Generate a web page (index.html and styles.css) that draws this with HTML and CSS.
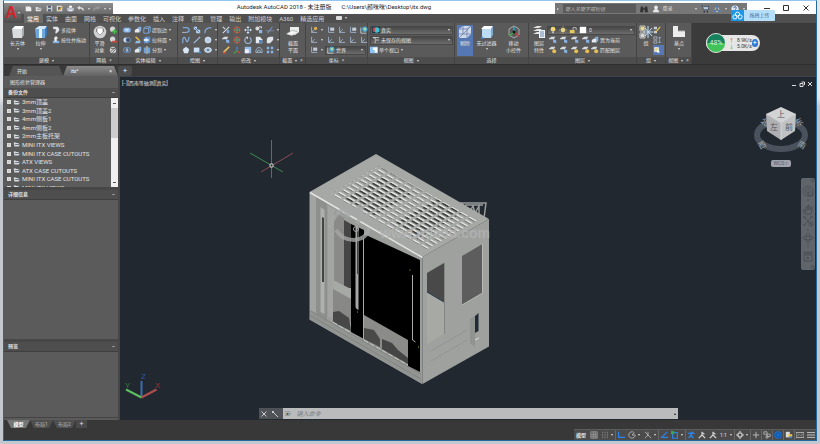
FILE: index.html
```html
<!DOCTYPE html>
<html lang="zh-CN">
<head>
    <meta charset="UTF-8">
    <meta name="viewport" content="width=device-width, initial-scale=1.0">
    <title>Autodesk AutoCAD 2018</title>
    <link rel="stylesheet" href="styles.css">
</head>
<body>
    <!-- icon sprite -->
    <svg class="sprite" aria-hidden="true">
        <symbol id="new" viewBox="0 0 10 10"><path d="M1 2h6l2 2v5H1z" fill="#eee"/></symbol>
        <symbol id="open" viewBox="0 0 10 10"><path d="M1 8V3h3l1 1h3v1l2 0-2 4H1z" fill="#ddd"/><path d="M3 6h6" stroke="#666"/></symbol>
        <symbol id="save" viewBox="0 0 10 10"><path d="M1 1h8v8H1z" fill="#c3ccd8"/><path d="M3 1h4v3H3zM3 6h4v3H3z" fill="#4a5668"/></symbol>
        <symbol id="saveas" viewBox="0 0 10 10"><path d="M1 1h8v8H1z" fill="#dcdcdc"/><path d="M3 3h4v4H3z" fill="#555"/><path d="M4 8l5-6" stroke="#e3a93a" stroke-width="2"/></symbol>
        <symbol id="print" viewBox="0 0 10 10"><path d="M3 1h4v3H3z" fill="#fff"/><path d="M0 4h10v4H0z" fill="#b9c2cc"/><path d="M2 7h6v2H2z" fill="#eef"/></symbol>
        <symbol id="undo" viewBox="0 0 10 10"><path d="M9 8c0-4-3-4-6-4" stroke="#ddd" stroke-width="2" fill="none"/><path d="M0 4l4-3v6z" fill="#ddd"/></symbol>
        <symbol id="redo" viewBox="0 0 10 10"><path d="M1 8c0-4 3-4 6-4" stroke="#999" stroke-width="2" fill="none"/><path d="M10 4L6 1v6z" fill="#999"/></symbol>
        <symbol id="box" viewBox="0 0 14 14"><path d="M1 4l3-3h9l-2 3z" fill="#fff"/><path d="M1 4h10v9H2z" fill="#d9dbdd"/><path d="M11 4l2-3v9l-2 3z" fill="#a8abae"/></symbol>
        <symbol id="extrude" viewBox="0 0 14 14"><path d="M1 4l4-3h8l-2 3z" fill="#cfe5fa"/><path d="M1 4h10v9H2z" fill="#6da7de"/><path d="M5 4h3v9H5z" fill="#e9f3fc"/><path d="M11 4l2-3v9l-2 3z" fill="#3c78b8"/></symbol>
        <symbol id="smooth" viewBox="0 0 14 14"><circle cx="7" cy="7" r="6.3" fill="#cfd0d1"/><path d="M3 4h8v3H3z" fill="#8b8d90"/><path d="M4 3h6v4L7 10 4 7z" fill="#fff" stroke="#777" stroke-width=".6"/></symbol>
        <symbol id="plane" viewBox="0 0 14 14"><path d="M4 2h9v5l-4 3H4z" fill="#eceded"/><path d="M0 9l6-4 6 1-6 5z" fill="#b9bcbe"/><path d="M1 9l5-3 5 1-5 3z" fill="#f8f8f8"/></symbol>
        <symbol id="cull" viewBox="0 0 14 14"><path d="M1 4l4-3h8v8l-4 4H1z" fill="#cdd8ea"/><path d="M1 4h8v9M9 4l4-3M5 1v8H1M5 9h8M1 13L13 1" stroke="#6d82aa" stroke-width=".8" fill="none"/></symbol>
        <symbol id="filter" viewBox="0 0 14 14"><path d="M1 4l3-3h9l-2 3z" fill="#fff"/><path d="M2 4h9v9H2z" fill="#bcdcf4"/><path d="M11 4l2-3v9l-2 3z" fill="#7ca9d0"/><circle cx="2" cy="13" r="1.2" fill="#3d82d0"/></symbol>
        <symbol id="gizmo" viewBox="0 0 14 14"><path d="M7 1l5 3v6l-5 3-5-3V4z" stroke="#a7abaf" fill="none"/><path d="M7 7V2" stroke="#29a7c4" stroke-width="1.6"/><path d="M7 7l-5 4" stroke="#3fae49" stroke-width="1.6"/><path d="M7 7l5 4" stroke="#c8413b" stroke-width="1.6"/><circle cx="7" cy="7" r="1.5" fill="#111"/></symbol>
        <symbol id="layerprop" viewBox="0 0 14 14"><path d="M1 3l4-2h5L7 3zM1 6l4-2h5L7 6zM1 9l4-2h5L7 9z" fill="#e5e5e5"/><path d="M7 5h6v8H7z" fill="#eef3f8"/><path d="M8 7h4M8 9h4M8 11h4" stroke="#6787ab"/></symbol>
        <symbol id="group" viewBox="0 0 14 14"><path d="M1 1h5v5H1zM1 8h5v5H1z" fill="none" stroke="#ccc"/><circle cx="3.5" cy="3.5" r="2" fill="#e8d98a"/><circle cx="3.5" cy="10.5" r="2" fill="#d7d7d7"/><path d="M9 1v12M4 7h10M6 3l7 8M13 3l-7 8" stroke="#bfe0fb"/></symbol>
        <symbol id="base" viewBox="0 0 14 14"><path d="M1 1h5v5h7v6H1z" fill="#ececec"/><path d="M6 6h7" stroke="#aaa"/></symbol>
        <symbol id="polysolid" viewBox="0 0 10 10"><path d="M1 1h6l2 2v3L6 9H4l1-5H2z" fill="#dfe3e8"/></symbol>
        <symbol id="presspull" viewBox="0 0 10 10"><path d="M1 6h8v3H1z" fill="#7fb2e4"/><path d="M5 0l3 3H6v4H3V3H2z" fill="#eee"/></symbol>
        <symbol id="meshadd" viewBox="0 0 10 10"><circle cx="4.5" cy="4" r="3.3" fill="#d5d5d5"/><path d="M7 4v6M4 7h6" stroke="#45b649" stroke-width="2"/></symbol>
        <symbol id="meshdel" viewBox="0 0 10 10"><circle cx="4.5" cy="4" r="3.3" fill="#d5d5d5"/><path d="M4 7h6" stroke="#d8493d" stroke-width="2"/></symbol>
        <symbol id="meshref" viewBox="0 0 10 10"><circle cx="5" cy="5" r="4" fill="#d5d5d5"/><path d="M2 7l7-6M4 9l5-6M2 3h6" stroke="#555"/></symbol>
        <symbol id="union" viewBox="0 0 10 10"><circle cx="3.3" cy="5" r="3.2" fill="#7fb0e6"/><circle cx="6.7" cy="5" r="3.2" fill="#7fb0e6"/><path d="M3 4h4M3 6h4" stroke="#fff"/></symbol>
        <symbol id="subtract" viewBox="0 0 10 10"><circle cx="3.5" cy="5" r="3" fill="#cfe2f6"/><circle cx="6.5" cy="5" r="3" fill="#4b4f55" stroke="#6f9fdb"/></symbol>
        <symbol id="intersect" viewBox="0 0 10 10"><circle cx="3.5" cy="5" r="3" fill="none" stroke="#6f9fdb"/><circle cx="6.5" cy="5" r="3" fill="none" stroke="#6f9fdb"/><path d="M5 3q2 2 0 4q-2-2 0-4" fill="#dfeaf8"/></symbol>
        <symbol id="solid" viewBox="0 0 10 10"><path d="M1 5l3-2h3v5H1z" fill="#e6e8ea"/><path d="M4 3l2-2h3v5L7 8V3z" fill="#83b2e4"/></symbol>
        <symbol id="edge" viewBox="0 0 10 10"><path d="M1 3h6v6H1zM1 3l2-2h6v6L7 9M7 3l2-2" stroke="#7fb4ee" fill="none"/></symbol>
        <symbol id="face" viewBox="0 0 10 10"><path d="M1 3l2-2h6v6L7 9H1z" fill="#5c91cb"/><path d="M1 4h6v2H1z" fill="#fff"/><path d="M4 2v6" stroke="#e6f0fa"/></symbol>
        <symbol id="split" viewBox="0 0 10 10"><path d="M1 2h3v7H1zM6 2h3v7H6z" fill="#6ba3de"/><path d="M5 0v10" stroke="#fff"/></symbol>
        <symbol id="brush" viewBox="0 0 10 10"><path d="M2 1l5 5" stroke="#e8b64c" stroke-width="2"/><path d="M1 9l2-3 6 1-2 2z" fill="#8fbdec"/></symbol>
        <symbol id="pline" viewBox="0 0 10 10"><path d="M1 2h4q4 0 4 3t-4 3" stroke="#7ea9dc" stroke-width="1.5" fill="none"/><path d="M0 8h5" stroke="#ccc"/></symbol>
        <symbol id="spline" viewBox="0 0 10 10"><path d="M1 9V4q2-5 4 1t4-4" stroke="#8eb9ea" stroke-width="1.3" fill="none"/></symbol>
        <symbol id="line" viewBox="0 0 10 10"><path d="M1 9l8-8" stroke="#a9c8ec" stroke-width="1.3"/></symbol>
        <symbol id="arc" viewBox="0 0 10 10"><path d="M1 9q0-7 8-7" stroke="#83aee2" stroke-width="1.5" fill="none"/></symbol>
        <symbol id="hatch" viewBox="0 0 10 10"><path d="M1 1h4v3l4 1v4H4V5L1 4z" fill="#bcd6f2"/><path d="M2 2l6 6" stroke="#386cad"/></symbol>
        <symbol id="polygon" viewBox="0 0 10 10"><path d="M5 1l4 3-1.5 5h-5L1 4z" fill="#dae6f4"/></symbol>
        <symbol id="rect" viewBox="0 0 10 10"><path d="M1 2h7v6H1z" fill="#cbdff5"/><path d="M7 7h3v2H7z" fill="#4e8cd2"/></symbol>
        <symbol id="circle" viewBox="0 0 10 10"><circle cx="5" cy="5" r="3.7" fill="#b8d0ea" stroke="#e4edf7"/></symbol>
        <symbol id="ellipse" viewBox="0 0 10 10"><ellipse cx="5" cy="5" rx="4.3" ry="3" fill="#a8c3e2" stroke="#e4edf7"/><circle cx="5" cy="5" r="1" fill="#333"/></symbol>
        <symbol id="trim" viewBox="0 0 10 10"><path d="M1 9l8-8M1 1l3 3" stroke="#d5dde6" stroke-width="1.3"/><path d="M6 5h3v4H6z" fill="#79a8df"/></symbol>
        <symbol id="rot3" viewBox="0 0 10 10"><circle cx="5" cy="5" r="3.7" stroke="#d0503f" stroke-width="1.3" fill="none"/><path d="M5 1v8M1 5h8" stroke="#5fae7d"/></symbol>
        <symbol id="move" viewBox="0 0 10 10"><path d="M5 0l2 2.500H3zM5 10l2-2.500H3zM0 5l2.500-2v4zM10 5L7.500 3v4z" fill="#dbe6f2"/><path d="M5 2v6M2 5h6" stroke="#aac5e4"/></symbol>
        <symbol id="copy" viewBox="0 0 10 10"><circle cx="3" cy="3" r="2.5" fill="#d9d9d9"/><path d="M5 5h4v4H5z" fill="#8cb8ea"/><path d="M5 1h3v2" stroke="#fff" fill="none"/></symbol>
        <symbol id="extend" viewBox="0 0 10 10"><path d="M0 6h10" stroke="#8195ae"/><path d="M2 9l6-8" stroke="#87b3e6"/></symbol>
        <symbol id="scalei" viewBox="0 0 10 10"><path d="M1 1h8v8H1z" fill="#93bce9"/><path d="M1 4h5v5H1z" fill="#eef"/></symbol>
        <symbol id="rotate" viewBox="0 0 10 10"><path d="M7 2a4 4 0 1 1-4 0" stroke="#9db8d6" stroke-width="1.4" fill="none"/><path d="M2 1h3v3z" fill="#dce7f3"/></symbol>
        <symbol id="axes" viewBox="0 0 10 10"><path d="M5 6V1" stroke="#4587d8" stroke-width="1.5"/><path d="M5 6L1 9" stroke="#43a84d" stroke-width="1.5"/><path d="M5 6l4 3" stroke="#c94942" stroke-width="1.5"/></symbol>
        <symbol id="mirror" viewBox="0 0 10 10"><path d="M1 1h5l3 3v5H1z" fill="#e7ecf2"/><path d="M5 5h4v4H5z" fill="#4f8ace"/></symbol>
        <symbol id="fillet" viewBox="0 0 10 10"><path d="M1 9V5q0-4 5-4h3v4L5 9z" fill="#dfe5ea"/></symbol>
        <symbol id="pencil" viewBox="0 0 10 10"><path d="M2 8l7-7" stroke="#f0c05c" stroke-width="2"/><path d="M1 9l4-1" stroke="#d8493d" stroke-width="2"/></symbol>
        <symbol id="offset" viewBox="0 0 10 10"><path d="M1 8q0-6 4-6t4 6zM3 8q0-3 2-3t2 3" stroke="#a8c2df" fill="none"/></symbol>
        <symbol id="array" viewBox="0 0 10 10"><path d="M1 1h3v3H1zM6 1h3v3H6zM1 6h3v3H1zM6 6h3v3H6z" fill="#86b6ec"/></symbol>
        <symbol id="ucs" viewBox="0 0 10 10"><path d="M2 1v7h7M2 8l4-4" stroke="#a6c0dc" fill="none"/></symbol>
        <symbol id="ucsdot" viewBox="0 0 10 10"><path d="M2 1v7h7M2 8l4-4" stroke="#a6c0dc" fill="none"/><circle cx="7" cy="3" r="2" fill="#e6ad4a"/></symbol>
        <symbol id="ucsbox" viewBox="0 0 10 10"><path d="M2 1v7h7" stroke="#a6c0dc" fill="none"/><path d="M4 2h5v4H4z" fill="#c3ccd6"/></symbol>
        <symbol id="globe" viewBox="0 0 10 10"><circle cx="6" cy="4" r="3.5" fill="#4ea0c6"/><path d="M4 3l3-1 1 3-2 1z" fill="#aee0a8"/><path d="M1 2v7h7" stroke="#d0dae4" fill="none"/></symbol>
        <symbol id="style" viewBox="0 0 10 10"><path d="M0 1h10v8H0z" fill="#17324a"/><circle cx="6" cy="5" r="3.5" fill="#43c1cf"/><path d="M1 2h3v5H1z" fill="#c94848"/></symbol>
        <symbol id="saved" viewBox="0 0 10 10"><path d="M1 2h3v7M1 2h8M5 5h4" stroke="#ddd" fill="none"/></symbol>
        <symbol id="viewport" viewBox="0 0 10 10"><path d="M0 1h10v8H0z" fill="#8fc4f2"/><path d="M4 2h5v6H6V5H4z" fill="#fff"/></symbol>
        <symbol id="bulb" viewBox="0 0 10 10"><circle cx="5" cy="4" r="3" fill="#f2d777"/><path d="M4 7h2v2H4z" fill="#ccc"/></symbol>
        <symbol id="sun" viewBox="0 0 10 10"><circle cx="5" cy="5" r="2.5" fill="#f7e8a4"/><path d="M5 0v10M0 5h10M2 2l6 6M8 2L2 8" stroke="#e8d27e" stroke-width=".7"/></symbol>
        <symbol id="lock" viewBox="0 0 10 10"><path d="M1 5h6v4H1z" fill="#e4c95f"/><path d="M5 5V2h4v3" stroke="#ccc" fill="none"/></symbol>
        <symbol id="swatch" viewBox="0 0 10 10"><path d="M1 1h8v8H1z" fill="#fff"/></symbol>
        <symbol id="layer" viewBox="0 0 10 10"><path d="M0 3l3-2h5L6 4H0z" fill="#d7dade"/><path d="M5 4l4 1v4L5 8z" fill="#86aede"/></symbol>
        <symbol id="layery" viewBox="0 0 10 10"><path d="M0 3l3-2h5L6 4H0z" fill="#d7dade"/><circle cx="6.5" cy="6.5" r="2.5" fill="#e8bd4e"/></symbol>
        <symbol id="grp1" viewBox="0 0 10 10"><path d="M1 1h4v3H1zM1 6h4v3H1z" fill="#c9ced4"/><path d="M4 7l5-6" stroke="#e7c34e" stroke-width="1.5"/></symbol>
        <symbol id="grp2" viewBox="0 0 10 10"><path d="M1 1h4v3H1zM1 6h4v3H1z" fill="none" stroke="#aeb7c1"/><path d="M7 2h3M7 8h3M8 1v8" stroke="#8fb5e2"/></symbol>
        <symbol id="grp3" viewBox="0 0 10 10"><path d="M2 2h5v5H2z" fill="#e2d77e" stroke="#eee"/><path d="M5 4l4 4H5z" fill="#fff"/></symbol>
        <symbol id="folder" viewBox="0 0 10 10"><path d="M1 2h3l1 1h3v2h2L8 8H2z" fill="#d5dbe1"/><path d="M3 5h6" stroke="#454b52"/></symbol>
        <symbol id="binoc" viewBox="0 0 10 10"><path d="M1 2h3v7H0zM6 2h3l1 7H6zM4 4h2v2H4z" fill="#333"/></symbol>
        <symbol id="user" viewBox="0 0 10 10"><circle cx="5" cy="3" r="2.3" fill="#e8e8e8"/><path d="M1 9q1-4 4-4t4 4z" fill="#e8e8e8"/></symbol>
        <symbol id="cart" viewBox="0 0 10 10"><path d="M0 1h2l1 5h6l1-4H3" fill="#bdc9d8" stroke="#34465e"/><circle cx="4" cy="8.5" r="1" fill="#223"/><circle cx="8" cy="8.5" r="1" fill="#223"/></symbol>
        <symbol id="share" viewBox="0 0 10 10"><path d="M5 1l4 7H1z" fill="none" stroke="#c5d6ea"/><circle cx="5" cy="2" r="1.6" fill="#4d79b0"/><circle cx="2" cy="7.5" r="1.6" fill="#4d79b0"/><circle cx="8" cy="7.5" r="1.6" fill="#4d79b0"/></symbol>
        <symbol id="help" viewBox="0 0 10 10"><circle cx="5" cy="5" r="4.5" fill="#e9eff7"/><path d="M3.500 4q0-2 1.500-2t1.500 1.500T5 6M5 7v1" stroke="#2c5fa8" stroke-width="1.2" fill="none"/></symbol>
        <symbol id="gridi" viewBox="0 0 10 10"><path d="M1 1h8v8H1zM1 4h8M1 6.500h8M4 1v8M6.500 1v8" stroke="#a2a2a2" fill="none"/></symbol>
        <symbol id="snap" viewBox="0 0 10 10"><path d="M2 1v8M5 1v8M8 1v8" stroke="#8d8d8d" stroke-dasharray="2 1"/></symbol>
        <symbol id="ortho" viewBox="0 0 10 10"><path d="M2 1v7h8" stroke="#2c84ea" stroke-width="1.5" fill="none"/></symbol>
        <symbol id="polar" viewBox="0 0 10 10"><path d="M9 5a4 4 0 1 1-2-3.500M5 5h4M5 5l3-3" stroke="#c0c0c0" fill="none"/></symbol>
        <symbol id="iso" viewBox="0 0 10 10"><path d="M1 1l8 8M5 1v5M5 5L1 9" stroke="#bbb" fill="none"/></symbol>
        <symbol id="track" viewBox="0 0 10 10"><path d="M9 1L2 8h8" stroke="#2c84ea" stroke-width="1.4" fill="none"/></symbol>
        <symbol id="osnap" viewBox="0 0 10 10"><path d="M2 2h6v7H2z" stroke="#2c84ea" stroke-width="1.4" fill="none"/><path d="M0 0h4v4H0z" fill="#35a84a"/></symbol>
        <symbol id="annob" viewBox="0 0 10 10"><path d="M5 1v4L2 9M5 5l3 4M1 3h8M7 1l2 3" stroke="#2c84ea" stroke-width="1.7" fill="none"/></symbol>
        <symbol id="anno" viewBox="0 0 10 10"><path d="M5 1v4L1 9M5 5l4 4M5 2l3 2" stroke="#d5d5d5" stroke-width="1.5" fill="none"/></symbol>
        <symbol id="gear" viewBox="0 0 10 10"><circle cx="5" cy="5" r="2.6" fill="none" stroke="#ccc" stroke-width="1.6"/><path d="M5 0v2M5 8v2M0 5h2M8 5h2" stroke="#ccc" stroke-width="1.5"/></symbol>
        <symbol id="plusi" viewBox="0 0 10 10"><path d="M5 1v8M1 5h8" stroke="#ccc"/></symbol>
        <symbol id="isolate" viewBox="0 0 10 10"><path d="M1 1h4v3H1zM5 4h4v3H5z" fill="none" stroke="#bbb"/><circle cx="5" cy="7.5" r="1.5" fill="none" stroke="#bbb"/></symbol>
        <symbol id="perf" viewBox="0 0 10 10"><circle cx="5" cy="5" r="4.7" fill="#1a6fd0"/><circle cx="5" cy="5" r="2.7" stroke="#0d468c" fill="none"/></symbol>
        <symbol id="hw" viewBox="0 0 10 10"><path d="M1 1h5v7H1z" fill="#dadada"/><path d="M4 4h5v3H4z" fill="#e8c64a"/><path d="M5 7h4v2H5z" fill="#3c83d8"/></symbol>
        <symbol id="full" viewBox="0 0 10 10"><path d="M0 2h10v6H0z" fill="none" stroke="#ccc"/><path d="M2 6l2-2M8 4L6 6" stroke="#ccc"/></symbol>
        <symbol id="menu" viewBox="0 0 10 10"><path d="M0 2h10M0 5h10M0 8h10" stroke="#ddd"/></symbol>
    </svg>

    <div class="app">
        <header class="header">
            <button class="app-btn"><b>A</b><i class="arr"></i></button>
            <div class="titlebar">
                <div class="qat">
                    <button><svg><use href="#new"/></svg></button>
                    <button><svg><use href="#open"/></svg></button>
                    <button><svg><use href="#save"/></svg></button>
                    <button><svg><use href="#saveas"/></svg></button>
                    <button><svg><use href="#print"/></svg></button>
                    <button><svg><use href="#undo"/></svg></button>
                    <i class="arr"></i>
                    <button><svg><use href="#redo"/></svg></button>
                    <i class="arr"></i>
                    <i class="arr"></i>
                </div>
                <h1 class="title"><span>Autodesk AutoCAD 2018 - 未注册版</span><span>C:\Users\颜咪咪\Desktop\itx.dwg</span></h1>
                <div class="infocenter">
                    <i class="arr side"></i>
                    <input class="search" type="text" placeholder="键入关键字或短语" aria-label="搜索">
                    <button><svg><use href="#binoc"/></svg></button>
                    <button class="login"><svg><use href="#user"/></svg>登录</button>
                    <i class="arr"></i>
                    <button><svg><use href="#cart"/></svg></button>
                    <button><svg><use href="#share"/></svg></button>
                    <i class="arr"></i>
                    <button><svg><use href="#help"/></svg></button>
                    <i class="arr"></i>
                </div>
                <div class="win-btns">
                    <button aria-label="最小化"><svg viewBox="0 0 8 8"><path d="M1 4.500h6"/></svg></button>
                    <button aria-label="最大化"><svg viewBox="0 0 8 8"><path d="M1.500 1.500h5v5h-5z"/></svg></button>
                    <button aria-label="关闭"><svg viewBox="0 0 8 8"><path d="M1.500 1.500l5 5M6.500 1.500l-5 5"/></svg></button>
                </div>
            </div>
            <nav class="tabs">
                <a href="#" class="active">常用</a><a href="#">实体</a><a href="#">曲面</a><a href="#">网格</a><a href="#">可视化</a><a href="#">参数化</a><a href="#">插入</a><a href="#">注释</a><a href="#">视图</a><a href="#">管理</a><a href="#">输出</a><a href="#">附加模块</a><a href="#">A360</a><a href="#">精选应用</a>
                <button class="pill"></button><i class="arr"></i>
            </nav>
            <button class="upload"><svg viewBox="0 0 14 11"><circle cx="7" cy="4" r="2.2"/><circle cx="4.2" cy="7" r="2.2"/><circle cx="9.8" cy="7" r="2.2"/></svg><span>拖拽上传</span></button>
        </header>

        <div class="ribbon">
            <section class="panel p-model">
                <div class="panel-body">
                    <button class="big"><svg><use href="#box"/></svg>长方体<i class="arr"></i></button>
                    <button class="big"><svg><use href="#extrude"/></svg>拉伸<i class="arr"></i></button>
                    <div class="stack">
                        <button class="tool"><svg><use href="#polysolid"/></svg>多段体</button>
                        <button class="tool"><svg><use href="#presspull"/></svg>按住并拖动</button>
                    </div>
                </div>
                <h2>建模<i class="arr"></i></h2>
            </section>
            <section class="panel p-mesh">
                <div class="panel-body">
                    <button class="big"><svg><use href="#smooth"/></svg>平滑<br>对象</button>
                    <div class="stack">
                        <button class="tool"><svg><use href="#meshadd"/></svg></button>
                        <button class="tool"><svg><use href="#meshdel"/></svg></button>
                        <button class="tool"><svg><use href="#meshref"/></svg></button>
                    </div>
                </div>
                <h2>网格<i class="launch">»</i></h2>
            </section>
            <section class="panel p-solid">
                <div class="panel-body stack">
                    <div class="row"><button class="tool"><svg><use href="#union"/></svg></button><button class="tool"><svg><use href="#solid"/></svg></button><button class="tool"><svg><use href="#edge"/></svg>提取边</button><i class="arr"></i></div>
                    <div class="row"><button class="tool"><svg><use href="#subtract"/></svg></button><button class="tool"><svg><use href="#brush"/></svg></button><button class="tool"><svg><use href="#face"/></svg>拉伸面</button><i class="arr"></i></div>
                    <div class="row"><button class="tool"><svg><use href="#intersect"/></svg></button><button class="tool"><svg><use href="#solid"/></svg></button><button class="tool"><svg><use href="#split"/></svg>分割</button><i class="arr"></i></div>
                </div>
                <h2>实体编辑<i class="arr"></i></h2>
            </section>
            <section class="panel p-draw">
                <div class="panel-body stack">
                    <div class="row"><button class="tool"><svg><use href="#pline"/></svg></button><button class="tool"><svg><use href="#hatch"/></svg></button><button class="tool"><svg><use href="#arc"/></svg></button><i class="arr"></i></div>
                    <div class="row"><button class="tool"><svg><use href="#spline"/></svg></button><button class="tool"><svg><use href="#line"/></svg></button><button class="tool"><svg><use href="#circle"/></svg></button><i class="arr"></i></div>
                    <div class="row"><button class="tool"><svg><use href="#polygon"/></svg></button><button class="tool"><svg><use href="#rect"/></svg></button><button class="tool"><svg><use href="#ellipse"/></svg></button><i class="arr"></i></div>
                </div>
                <h2>绘图<i class="arr"></i></h2>
            </section>
            <section class="panel p-modify">
                <div class="panel-body stack">
                    <div class="row"><button class="tool"><svg><use href="#trim"/></svg></button><button class="tool"><svg><use href="#rot3"/></svg></button><button class="tool"><svg><use href="#move"/></svg></button><button class="tool"><svg><use href="#copy"/></svg></button><button class="tool"><svg><use href="#extend"/></svg></button><i class="arr"></i></div>
                    <div class="row"><button class="tool"><svg><use href="#layer"/></svg></button><button class="tool"><svg><use href="#rot3"/></svg></button><button class="tool"><svg><use href="#rotate"/></svg></button><button class="tool"><svg><use href="#mirror"/></svg></button><button class="tool"><svg><use href="#fillet"/></svg></button><i class="arr"></i></div>
                    <div class="row"><button class="tool"><svg><use href="#pencil"/></svg></button><button class="tool"><svg><use href="#axes"/></svg></button><button class="tool"><svg><use href="#scalei"/></svg></button><button class="tool"><svg><use href="#offset"/></svg></button><button class="tool"><svg><use href="#array"/></svg></button><i class="arr"></i></div>
                </div>
                <h2>修改<i class="arr"></i></h2>
            </section>
            <section class="panel p-section">
                <div class="panel-body">
                    <button class="big"><svg><use href="#plane"/></svg>截面<br>平面</button>
                </div>
                <h2>截面<i class="arr"></i><i class="launch">»</i></h2>
            </section>
            <section class="panel p-coord">
                <div class="panel-body stack">
                    <div class="row"><button class="tool"><svg><use href="#ucsdot"/></svg></button><i class="arr"></i><button class="tool"><svg><use href="#ucsbox"/></svg></button><button class="tool"><svg><use href="#ucs"/></svg></button><button class="tool"><svg><use href="#ucsbox"/></svg></button><button class="tool"><svg><use href="#globe"/></svg></button></div>
                    <div class="row"><button class="tool"><svg><use href="#ucs"/></svg></button><i class="arr"></i><button class="tool"><svg><use href="#ucs"/></svg></button><button class="tool"><svg><use href="#ucs"/></svg></button><button class="tool"><svg><use href="#ucs"/></svg></button><button class="tool"><svg><use href="#ucs"/></svg></button></div>
                    <div class="row"><button class="tool"><svg><use href="#ucsbox"/></svg></button><i class="arr"></i><div class="combo"><svg><use href="#globe"/></svg><select aria-label="坐标系"><option>世界</option></select><i class="arr"></i></div></div>
                </div>
                <h2>坐标<i class="launch">»</i></h2>
            </section>
            <section class="panel p-view">
                <div class="panel-body stack">
                    <div class="row"><div class="combo"><svg><use href="#style"/></svg><select aria-label="视觉样式"><option>真实</option></select><i class="arr"></i></div></div>
                    <div class="row"><div class="combo"><svg><use href="#saved"/></svg><select aria-label="视图"><option>未保存的视图</option></select><i class="arr"></i></div></div>
                    <div class="row"><button class="tool"><svg><use href="#viewport"/></svg>单个视口</button><i class="arr"></i></div>
                </div>
                <h2>视图<i class="arr"></i></h2>
            </section>
            <section class="panel p-select">
                <div class="panel-body">
                    <button class="big on"><svg><use href="#cull"/></svg>剔除</button>
                    <button class="big"><svg><use href="#filter"/></svg>无过滤器<i class="arr"></i></button>
                    <button class="big"><svg><use href="#gizmo"/></svg>移动<br>小控件</button>
                </div>
                <h2>选择</h2>
            </section>
            <section class="panel p-layer">
                <div class="panel-body">
                    <button class="big"><svg><use href="#layerprop"/></svg>图层<br>特性</button>
                    <div class="stack">
                        <div class="row"><div class="combo"><svg><use href="#bulb"/></svg><svg><use href="#sun"/></svg><svg><use href="#lock"/></svg><svg><use href="#swatch"/></svg><select aria-label="图层"><option>0</option></select><i class="arr"></i></div></div>
                        <div class="row"><button class="tool"><svg><use href="#layer"/></svg></button><button class="tool"><svg><use href="#layer"/></svg></button><button class="tool"><svg><use href="#layer"/></svg></button><button class="tool"><svg><use href="#layer"/></svg></button><button class="tool"><svg><use href="#solid"/></svg>置为当前</button></div>
                        <div class="row"><button class="tool"><svg><use href="#layery"/></svg></button><button class="tool"><svg><use href="#layer"/></svg></button><button class="tool"><svg><use href="#layery"/></svg></button><button class="tool"><svg><use href="#layery"/></svg></button><button class="tool"><svg><use href="#layery"/></svg>匹配图层</button></div>
                    </div>
                </div>
                <h2>图层<i class="arr"></i></h2>
            </section>
            <section class="panel p-group">
                <div class="panel-body">
                    <button class="big"><svg><use href="#group"/></svg>组</button>
                    <div class="stack">
                        <button class="tool"><svg><use href="#grp1"/></svg></button>
                        <button class="tool"><svg><use href="#grp2"/></svg></button>
                        <button class="tool on"><svg><use href="#grp3"/></svg></button>
                    </div>
                </div>
                <h2>组<i class="arr"></i></h2>
            </section>
            <section class="panel p-base">
                <div class="panel-body">
                    <button class="big"><svg><use href="#base"/></svg>基点<i class="arr"></i></button>
                </div>
                <h2>视图<i class="arr"></i><i class="launch">»</i></h2>
            </section>
            <div class="speed">
                <div class="ball">48%</div>
                <div class="rates"><span><i class="up">↑</i>8.9K/s</span><span><i class="down">↓</i>5.0K/s</span></div>
                <button class="boost">+</button>
            </div>
        </div>

        <nav class="file-tabs">
            <a href="#">开始</a>
            <a href="#" class="active">itx*<i>×</i></a>
            <button>+</button>
        </nav>

        <main class="main">
            <aside class="palette">
                <h2>图形修复管理器</h2>
                <section class="backup">
                    <h3>备份文件<span>−</span></h3>
                    <div class="list">
                        <ul>
                            <li><i></i><svg><use href="#folder"/></svg>3mm顶盖</li>
                            <li><i></i><svg><use href="#folder"/></svg>3mm顶盖2</li>
                            <li><i></i><svg><use href="#folder"/></svg>4mm侧板1</li>
                            <li><i></i><svg><use href="#folder"/></svg>4mm侧板2</li>
                            <li><i></i><svg><use href="#folder"/></svg>2mm主板托架</li>
                            <li><i></i><svg><use href="#folder"/></svg>MINI ITX VIEWS</li>
                            <li><i></i><svg><use href="#folder"/></svg>MINI ITX CASE CUTOUTS</li>
                            <li><i></i><svg><use href="#folder"/></svg>ATX VIEWS</li>
                            <li><i></i><svg><use href="#folder"/></svg>ATX CASE CUTOUTS</li>
                            <li><i></i><svg><use href="#folder"/></svg>MINI ITX CASE CUTOUTS</li>
                            <li><i></i><svg><use href="#folder"/></svg>MINI ITX VIEWS</li>
                        </ul>
                        <div class="scroll"><b></b><span></span><b class="dn"></b></div>
                    </div>
                </section>
                <section class="details"><h3>详细信息<span>−</span></h3></section>
                <section class="preview"><h3>预览<span>−</span></h3></section>
            </aside>

            <div class="canvas">
                <div class="vp-label">[−][西南等轴测][真实]</div>
                <div class="vp-btns">
                    <button aria-label="最小化"><svg viewBox="0 0 6 6"><path d="M1 4.500h4"/></svg></button>
                    <button aria-label="还原"><svg viewBox="0 0 6 6"><path d="M1 2.500h3v3H1zM2.500 1h3v3"/></svg></button>
                    <button aria-label="关闭"><svg viewBox="0 0 6 6"><path d="M1 1l4 4M5 1L1 5"/></svg></button>
                </div>

                <svg class="cursor" viewBox="248 138 48 42">
                    <path d="M271.500 140v38" stroke="#5d5fae"/>
                    <path d="M250 153l33 19" stroke="#3f8a51"/>
                    <path d="M293 153l-32 19" stroke="#8d4a52"/>
                    <path d="M270 164h3v3h-3z" fill="#222831" stroke="#ccc"/>
                </svg>

                <!-- ITX case, south-west isometric -->
                <svg class="model" viewBox="300 150 200 240">
                    <defs>
                        <pattern id="vents" width="5" height="10" patternUnits="userSpaceOnUse" patternTransform="matrix(.87 -.5 .87 .5 334 195)">
                            <rect width="1.5" height="7.5" fill="#e6e7e5"/>
                            <rect x="3.6" y=".5" width="1.4" height="7" fill="#7b7d7c"/>
                        </pattern>
                        <pattern id="deep" width="5" height="10" patternUnits="userSpaceOnUse" patternTransform="matrix(.87 -.5 .87 .5 334 195)">
                            <rect width="1.5" height="7.5" fill="#e6e7e5"/>
                            <rect x="3" y=".5" width="2" height="7" fill="#3f4140"/>
                        </pattern>
                    </defs>
                    <path d="M461 203h25l-2 15-8-2zM465 205h18M469 213l4-7 2 7 4-7v9" fill="none" stroke="#9a9c9b" stroke-width="1.5"/>
                    <path d="M309.500 192L422.500 257v127L309.500 319.500z" fill="#9b9d9b"/>
                    <path d="M310 193l17 10v118l-17-10z" fill="#8d8f8d"/>
                    <path d="M310 193l6 4v117l-6-4z" fill="#a2a4a2"/>
                    <path d="M320.500 207l4 3v104l-4-2z" fill="#aeb0ae"/>
                    <path d="M322 217l2 1v64h-2z" fill="#444"/>
                    <path d="M328 206l7 4v110l-7-4z" fill="#a3a5a3"/>
                    <path d="M334 212l10 6v72l-10-7z" fill="#8a8a88"/>
                    <path d="M344 220l7 4v64h-7z" fill="#454545"/>
                    <path d="M333 280l18 9v10l-18-9z" fill="#a7a9a5"/>
                    <path d="M333 289l18 10v24l-18-11z" fill="#888886"/>
                    <path d="M333 312l6-1 10 7 2 13-18-9z" fill="#474747"/>
                    <path d="M364 315l44 25v25l-44-25z" fill="#8b8b89"/>
                    <path d="M364 328l10 2 6 9v8l-16-8z" fill="#4a4a48"/>
                    <path d="M382 339l10 4 6 7 10 8v6l-26-15z" fill="#454545"/>
                    <path d="M351 224l13 6v109l-13-7z" fill="#000"/>
                    <path d="M366 235l54 25v112l-12-6v-26l-44-25v-79z" fill="#000"/>
                    <path d="M363.500 238v101" stroke="#aaa"/>
                    <path d="M355.500 225v82q1 3 3 3V228z" fill="#a6a8a6"/>
                    <path d="M357.500 229v45" stroke="#444"/>
                    <path d="M412.500 275v65l3 2" fill="none" stroke="#a9aba9"/>
                    <path d="M311 311l109 62 2 11-112.500-64.500z" fill="#929492"/>
                    <path d="M311 311l110 63M311 316l110 63" stroke="#7e807e" stroke-width=".8" fill="none"/>
                    <path d="M333 322l18 11M364 340l44 25" stroke="#c9cbc9" stroke-dasharray="5 2"/>
                    <path d="M409.500 270h1M357 312h1M418 347h1" stroke="#a8a23a"/>
                    <path d="M422.500 257L489 219v127.500L422.500 384z" fill="#9fa19f"/>
                    <path d="M427 273l17-10v39l-17-10z" fill="#494949"/>
                    <path d="M427 292l17 10v32l-17 10z" fill="#a7a9a5"/>
                    <path d="M427 292l17 10" stroke="#26384b"/>
                    <path d="M444.500 263v71" stroke="#838583"/>
                    <path d="M462 256l20.500-12v49L462 305z" fill="#5d5d5d"/>
                    <path d="M462 305l20.500-12M482.500 244v49" stroke="#b6b8b6" fill="none"/>
                    <path d="M431 351l36-21M431 361l36-21" stroke="#8f918f" stroke-width=".8"/>
                    <path d="M473 318l5.500-5v18l-5.500 3z" fill="#222b35"/>
                    <path d="M470 319l5-3v31l-5-4z" fill="#919391"/>
                    <path d="M475 340l4-2" stroke="#ddd"/>
                    <path d="M376 154L489 219l-66.500 38L309.500 192z" fill="#a6a8a5"/>
                    <path d="M310 192.500l112.500 65" stroke="#e4e5e3" stroke-width="1.5"/>
                    <path d="M331 194l48-28 99 55-50 29z" fill="url(#vents)"/>
                    <path d="M343 199l38-22 30 17-38 22zM394 224l44-25 24 14-44 26z" fill="url(#deep)"/>
                    <!-- watermark -->
                    <path d="M330 228q3-14 14-19l4 6 12-9 2 8-5 10M336 230q6 10 18 10 13-1 15-12" fill="none" stroke="#a5a7a6" stroke-width="4" opacity=".8"/>
                    <circle cx="356" cy="229" r="2.5" fill="none" stroke="#aaa"/>
                    <text x="380" y="238" class="mark">www.mfcad.com</text>
                </svg>

                <svg class="cube" viewBox="750 100 62 56">
                    <ellipse cx="781" cy="135" rx="24" ry="14" fill="none" stroke="#4a535d" stroke-width="6"/>
                    <path d="M781 107l15 7-15 9-15-9z" fill="#d2d3d4"/>
                    <path d="M766 114l15 9v17l-14-9z" fill="#aeb0b3"/>
                    <path d="M796 114l-15 9v17l14-9z" fill="#bfc1c3"/>
                    <path d="M766 114l15 9 15-9M781 123v17" stroke="#e6e6e6" stroke-width=".6" fill="none"/>
                    <g class="face"><text x="777" y="117">上</text><text x="770" y="130">左</text><text x="785" y="130">前</text></g>
                    <g class="dir"><text x="758" y="148" transform="rotate(-30 762 145)">西</text><text x="798" y="148" transform="rotate(30 802 145)">南</text><text x="761" y="125" transform="rotate(30 765 122)">北</text><text x="795" y="125" transform="rotate(-30 799 122)">东</text></g>
                </svg>
                <button class="wcs">WCS ▿</button>

                <div class="navbar">
                    <svg viewBox="0 0 14 92">
                        <circle cx="11.5" cy="2.5" r="1.5"/><circle cx="7" cy="13" r="5"/><circle cx="7" cy="13" r="2.5"/><path d="M7 13v5h5v-5M6 22h2M6 52h2M6 68h2"/>
                        <path d="M4 36l-2-4 2 0 1 2v-5l1.500-1 .5 4 .5-5 1.500 1v4l1.500-3 1 1-1.500 6z"/>
                        <path d="M3 39l8 8M11 39l-8 8M2 39h3M9 39h3M2 47h3"/><circle cx="10" cy="46" r="2"/>
                        <ellipse cx="7" cy="60" rx="5" ry="2"/><ellipse cx="7" cy="60" rx="2" ry="5"/>
                        <path d="M3 77h8v6H3zM3 74h2v2H3zM6 74h2v2H6zM9 74h2v2H9zM6 79l2 1-2 1z"/><circle cx="11.5" cy="89" r="1.5"/>
                    </svg>
                </div>

                <svg class="axis" viewBox="122 372 40 30">
                    <path d="M141.500 397.500V381" stroke="#3f6cae" stroke-width="2"/>
                    <path d="M141.500 397.500L126 389.500" stroke="#5cbf60" stroke-width="2"/>
                    <path d="M141.500 397.500l15-8" stroke="#b04f4f" stroke-width="2"/>
                    <text x="141" y="379" fill="#2c57ae">Z</text><text x="125" y="388" fill="#2c7c35">Y</text><text x="155" y="388" fill="#973434">X</text>
                </svg>

                <div class="cmd">
                    <button aria-label="关闭"><svg viewBox="0 0 10 10"><path d="M2.500 2.500l5 5M7.500 2.500l-5 5"/></svg></button>
                    <button aria-label="自定义"><svg viewBox="0 0 10 10"><path d="M3 3l5 5M2 2l2 2M2 4l2-2"/></svg></button>
                    <label for="cmd">▣-</label>
                    <input id="cmd" type="text" placeholder="键入命令">
                    <i class="arr"></i>
                </div>
            </div>
        </main>

        <footer class="footer">
            <nav class="layout-tabs">
                <a href="#" class="active">模型</a><a href="#">布局1</a><a href="#">布局2</a><button>+</button>
            </nav>
            <div class="status">
                <button class="space">模型</button>
                <button><svg><use href="#gridi"/></svg></button>
                <button><svg><use href="#snap"/></svg></button>
                <i class="arr"></i>
                <button class="sep"><svg><use href="#ortho"/></svg></button>
                <button><svg><use href="#polar"/></svg></button>
                <i class="arr"></i>
                <button><svg><use href="#iso"/></svg></button>
                <i class="arr"></i>
                <button class="sep"><svg><use href="#track"/></svg></button>
                <button><svg><use href="#osnap"/></svg></button>
                <i class="arr"></i>
                <button class="sep"><svg><use href="#annob"/></svg></button>
                <button><svg><use href="#anno"/></svg></button>
                <button><svg><use href="#anno"/></svg></button>
                <button>1:1</button>
                <i class="arr"></i>
                <button class="sep"><svg><use href="#gear"/></svg></button>
                <i class="arr"></i>
                <button class="sep"><svg><use href="#plusi"/></svg></button>
                <button class="sep"><svg><use href="#isolate"/></svg></button>
                <button class="sep"><svg><use href="#perf"/></svg></button>
                <button class="sep"><svg><use href="#hw"/></svg></button>
                <button class="sep"><svg><use href="#full"/></svg></button>
                <button><svg><use href="#menu"/></svg></button>
            </div>
        </footer>
    </div>
</body>
</html>
```

FILE: styles.css
```css
* {
    box-sizing: border-box;
}
body {
    margin: 0;
    padding: 0 3px 3px;
    min-height: 100vh;
    display: flex;
    background: linear-gradient(#e4e7ea 0, #e4e7ea 22%, #c3c7ce 24%, #c3c7ce 100%);
    font-family: Roboto, "Noto Sans CJK SC", sans-serif;
    font-size: 5px;
    line-height: 7px;
    color: #e2e2e2;
}
h1, h2, h3, ul {
    margin: 0;
    padding: 0;
    font-size: inherit;
    font-weight: normal;
    list-style: none;
}
button, input, select {
    margin: 0;
    padding: 0;
    border: 0;
    background: none;
    font: inherit;
    color: inherit;
    appearance: none;
    outline: none;
}
a {
    color: inherit;
    text-decoration: none;
}
i {
    font-style: normal;
}
.sprite {
    position: absolute;
    width: 0;
    height: 0;
}
button svg, .combo svg {
    width: 8px;
    height: 8px;
    display: block;
    flex: none;
}
.arr {
    width: 0;
    height: 0;
    flex: none;
    border: 1px solid transparent;
    border-top: 2px solid #ddd;
    border-bottom: 0;
}
.arr.side {
    border: 1px solid transparent;
    border-left: 2px solid #ddd;
    border-right: 0;
}

.app {
    flex: 1;
    min-width: 0;
    display: flex;
    flex-direction: column;
    border: 1px solid #24699c;
    border-top-color: #93c6ef;
    background: #3a3a3a;
}

/* title bar and ribbon tabs */
.header {
    position: relative;
    display: grid;
    grid-template-columns: 17px 1fr;
    grid-template-rows: 13px 9px;
    background: #fff;
}
.app-btn {
    grid-row: 1 / 3;
    margin-top: 2px;
    padding-right: 1px;
    background: linear-gradient(#8a8a8a, #4c4c4c);
    display: flex;
    align-items: center;
}
.app-btn b {
    flex: 1;
    font: bold 16px/16px "Liberation Sans", sans-serif;
    color: #d0262c;
}
.titlebar {
    display: flex;
    background: #fff;
}
.qat {
    width: 92px;
    margin-top: 2px;
    padding: 0 2px 0 4px;
    display: flex;
    align-items: center;
    justify-content: space-between;
    background: linear-gradient(#8d8d8d, #6a6a6a);
}
.qat svg {
    width: 7px;
    height: 7px;
}
.title {
    flex: 1;
    display: flex;
    justify-content: center;
    gap: 10px;
    font-size: 6px;
    line-height: 12px;
    color: #222;
    white-space: nowrap;
}
.infocenter {
    width: 192px;
    margin: 2px 0 0;
    padding: 0 2px;
    display: flex;
    align-items: center;
    gap: 4px;
    background: #777;
}
.search {
    width: 76px;
    height: 9px;
    padding-left: 2px;
    background: #5a5a5a;
    font-style: italic;
}
.search::placeholder {
    color: #b5b5b5;
}
.login {
    width: 40px;
    display: flex;
    align-items: center;
    gap: 2px;
}
.win-btns {
    width: 69px;
    padding-left: 10px;
    display: flex;
    justify-content: space-around;
    align-items: center;
}
.win-btns path {
    fill: none;
    stroke: #333;
}
.tabs {
    display: flex;
    align-items: stretch;
    padding-left: 3px;
    background: #505050;
    font-size: 6px;
    line-height: 9px;
}
.tabs a {
    padding: 0 4px 0 3px;
    color: #d0d0d0;
}
.tabs .active {
    background: #6b6b6b;
    color: #fff;
}
.tabs .pill {
    width: 6px;
    height: 4px;
    margin: 2px 3px 0 8px;
    border-radius: 1px;
    background: #ddd;
}
.tabs .arr {
    margin-top: 3px;
}
.upload {
    position: absolute;
    right: 41px;
    top: 9px;
    width: 44px;
    height: 11px;
    display: flex;
    align-items: center;
    background: #b7def8;
    border-radius: 1px;
    color: #3f6f9b;
    z-index: 1;
}
.upload svg {
    width: 13px;
    height: 11px;
    background: #1f97e6;
    fill: none;
    stroke: #fff;
}
.upload span {
    flex: 1;
}

/* ribbon */
.ribbon {
    position: relative;
    display: flex;
    border-bottom: 1px solid #2e2e2e;
    background: #3b3b3b;
    white-space: nowrap;
}
.panel {
    display: flex;
    flex-direction: column;
    border-right: 1px solid #444;
    background: #5a5a5a;
}
.panel-body {
    height: 34px;
    padding: 2px 1px 0 2px;
    display: flex;
}
.panel h2 {
    height: 7px;
    display: flex;
    justify-content: center;
    align-items: center;
    gap: 3px;
    background: #4d4d4d;
    line-height: 7px;
}
.stack {
    display: flex;
    flex-direction: column;
    flex: 1;
}
.row {
    height: 10px;
    display: flex;
    align-items: center;
}
.row > .arr {
    margin: 0 2px;
}
.tool {
    height: 10px;
    min-width: 11px;
    display: flex;
    align-items: center;
    justify-content: center;
    gap: 1px;
}
.stack > .tool {
    justify-content: flex-start;
}
.big {
    height: 31px;
    display: flex;
    flex-direction: column;
    align-items: center;
    flex: 1;
    line-height: 7px;
}
.big svg {
    width: 14px;
    height: 14px;
    margin-bottom: 1px;
}
.big .arr {
    margin-top: 1px;
}
.on {
    background: #5578b4;
}
.combo {
    flex: 1;
    height: 9px;
    padding: 0 2px 0 1px;
    display: flex;
    align-items: center;
    gap: 1px;
    background: linear-gradient(#474747, #6c6c6c);
    border: 1px solid #484848;
}
.combo select {
    flex: 1;
    min-width: 0;
}
.p-model { width: 86px; }
.p-model .big { flex: 0 0 23px; }
.p-mesh { width: 29px; }
.p-mesh .big { flex: 0 0 15px; }
.p-mesh .stack { padding-left: 2px; }
.p-solid { width: 59px; }
.p-draw { width: 40px; }
.p-modify { width: 62px; }
.p-section { width: 26px; }
.p-coord { width: 62px; }
.p-view { width: 87px; }
.p-select { width: 74px; }
.p-select .on { flex: 0 0 16px; }
.p-layer { width: 108px; }
.p-layer .big { flex: 0 0 16px; }
.p-layer .combo { gap: 2px; }
.p-group { width: 29px; }
.p-group .stack { flex: 0 0 11px; }
.p-base { width: 26px; }

.speed {
    width: 54px;
    height: 16px;
    margin: 12px 0 0 14px;
    display: flex;
    align-items: center;
    border-radius: 8px;
    background: #e6e6e6;
    color: #333;
}
.ball {
    width: 20px;
    height: 20px;
    flex: none;
    border: 1px solid #dfe6df;
    border-radius: 50%;
    background: linear-gradient(#17805c 50%, #40c45a 50%);
    color: #d8f5dc;
    font-size: 7px;
    line-height: 18px;
    text-align: center;
}
.rates {
    flex: 1;
    padding-left: 3px;
    line-height: 6px;
}
.rates span {
    display: flex;
    gap: 3px;
}
.up { color: #d33; }
.down { color: #2a9a3c; }
.boost {
    width: 8px;
    height: 8px;
    margin-right: 2px;
    border-radius: 50%;
    background: #2f76d2;
    color: #fff;
    font-size: 8px;
    line-height: 8px;
}

/* drawing tabs */
.file-tabs {
    height: 11px;
    padding: 1px 0 0 5px;
    display: flex;
    background: #393939;
    line-height: 10px;
}
.file-tabs a {
    width: 54px;
    padding: 0 6px 0 8px;
    display: flex;
    justify-content: space-between;
    background: #555;
    clip-path: polygon(4px 0, calc(100% - 4px) 0, 100% 100%, 0 100%);
}
.file-tabs .active {
    width: 55px;
    background: linear-gradient(#8a8a8a, #636363);
    color: #fff;
}
.file-tabs button {
    width: 14px;
    background: #4c4c4c;
    border-radius: 2px;
    font-size: 8px;
    line-height: 8px;
}

/* recovery palette */
.main {
    flex: 1;
    display: flex;
}
.palette {
    width: 116px;
    padding-bottom: 2px;
    display: flex;
    flex-direction: column;
    background: #5b5b5b;
    border-right: 2px solid #464646;
}
.palette h2 {
    padding-left: 6px;
    line-height: 12px;
}
.palette h3 {
    height: 10px;
    padding: 0 3px 0 4px;
    display: flex;
    justify-content: space-between;
    background: #4e4e4e;
    border-bottom: 1px solid #3f3f3f;
    font-weight: bold;
    line-height: 9px;
}
.list {
    height: 89px;
    display: flex;
    overflow: hidden;
}
.list ul {
    flex: 1;
    height: 94px;
    display: grid;
    grid-auto-rows: 1fr;
    font-size: 6px;
    line-height: 8px;
}
.list li {
    display: flex;
    align-items: center;
    padding-left: 3px;
}
.list li i {
    width: 4px;
    height: 4px;
    background: #ccc;
    border: 1px solid #ddd;
}
.list li svg {
    width: 7px;
    height: 7px;
    margin: 0 2px;
}
.scroll {
    width: 7px;
    display: flex;
    flex-direction: column;
    background: #f0f0f0;
}
.scroll b {
    height: 10px;
    margin: 0 2px;
    background: linear-gradient(#555, #555) center / 3px 1px no-repeat;
}
.scroll span {
    height: 30px;
    background: #cdcdcd;
}
.scroll .dn {
    margin-top: auto;
}
.details, .preview {
    border-top: 3px solid #474747;
}
.details {
    flex: 152;
}
.preview {
    flex: 77;
    border-bottom: 1px solid #444;
}

/* viewport */
.canvas {
    flex: 1;
    position: relative;
    overflow: hidden;
    background: #212830;
    border-top: 1px solid #3c434b;
}
.vp-label {
    padding: 3px 2px;
}
.vp-btns {
    position: absolute;
    top: 4px;
    right: 3px;
    display: flex;
    gap: 2px;
}
.vp-btns svg {
    width: 6px;
    height: 6px;
    fill: none;
    stroke: #ddd;
}
.cursor, .model, .cube, .axis {
    position: absolute;
}
.cursor {
    left: 128px;
    top: 61px;
    width: 48px;
    height: 42px;
}
.model {
    left: 180px;
    top: 73px;
    width: 200px;
    height: 240px;
}
.mark {
    font: bold 14px "Liberation Sans", sans-serif;
    fill: #b4b6b5;
    opacity: .7;
}
.cube {
    right: 4px;
    top: 23px;
    width: 62px;
    height: 56px;
}
.face {
    font-size: 8px;
    fill: #55585c;
}
.dir {
    font-size: 8px;
    fill: #a5aab0;
}
.wcs {
    position: absolute;
    right: 25px;
    top: 83px;
    width: 20px;
    height: 7px;
    border-radius: 2px;
    background: #a0a2ae;
    color: #555a66;
    line-height: 7px;
}
.navbar {
    position: absolute;
    right: 1px;
    top: 101px;
    width: 14px;
    height: 92px;
    border-radius: 2px;
    background: #5f656b;
}
.navbar svg {
    display: block;
    fill: none;
    stroke: #42474d;
    stroke-width: .7;
}
.axis {
    left: 2px;
    bottom: 18px;
    width: 40px;
    height: 30px;
    font: 8px "Liberation Sans", sans-serif;
}
.cmd {
    position: absolute;
    left: 139px;
    right: 138px;
    bottom: 1px;
    height: 11px;
    padding-right: 2px;
    display: flex;
    align-items: center;
    gap: 1px;
    background: linear-gradient(90deg, #4f5256 24px, #b9bbbd 24px);
    color: #444;
}
.cmd button svg {
    width: 10px;
    height: 10px;
    fill: none;
    stroke: #ccc;
}
.cmd label {
    padding: 0 4px;
}
.cmd input {
    flex: 1;
    font-size: 6px;
}
.cmd input::placeholder {
    color: #777;
    font-style: italic;
}
.cmd .arr {
    border-top: 0;
    border-bottom: 2px solid #222;
}

/* layout tabs and status bar */
.footer {
    height: 20px;
    display: flex;
    justify-content: space-between;
    background: #383838;
}
.layout-tabs {
    height: 8px;
    padding-left: 3px;
    display: flex;
    line-height: 8px;
}
.layout-tabs a {
    width: 23px;
    background: #4f4f4f;
    color: #bbb;
    text-align: center;
    clip-path: polygon(0 0, 100% 0, calc(100% - 4px) 100%, 4px 100%);
}
.layout-tabs .active {
    background: #757575;
    color: #fff;
    font-weight: bold;
}
.layout-tabs button {
    width: 11px;
    background: #4a4a4a;
    font-size: 7px;
    line-height: 8px;
}
.status {
    height: 11px;
    margin-top: auto;
    display: flex;
    align-items: center;
    background: #4b4b4b;
    border-top: 1px solid #5c5c5c;
}
.status button {
    width: 11px;
    height: 10px;
    display: flex;
    align-items: center;
    justify-content: center;
}
.status .space {
    width: 14px;
    font-weight: bold;
}
.status .sep {
    border-left: 1px solid #666;
}
.status .arr {
    margin: 0 2px 0 1px;
}
```
